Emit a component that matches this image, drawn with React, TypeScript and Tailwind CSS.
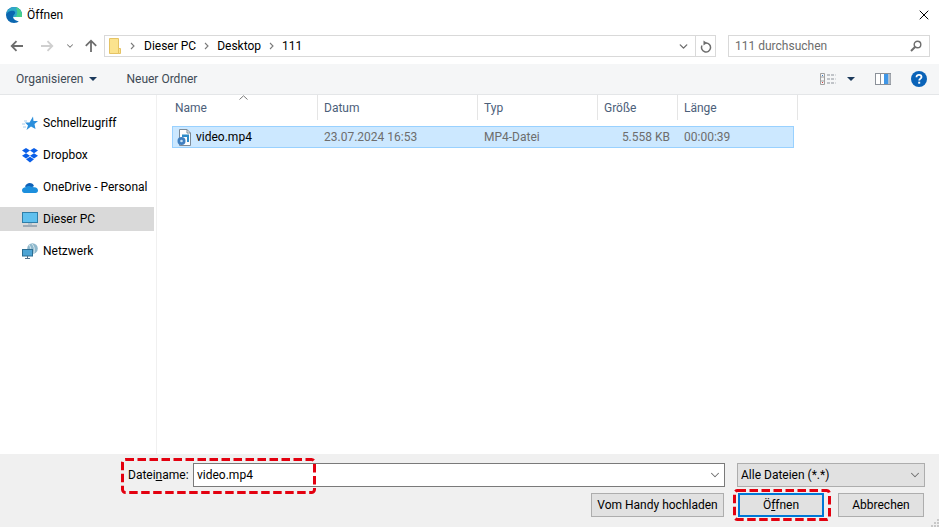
import { ChevronDown, X } from "lucide-react";

const font = "font-['Roboto',sans-serif]";

function EdgeLogo() {
  return (
    <svg width="16" height="16" viewBox="0 0 16 16">
      <circle cx="8" cy="8" r="8" fill="#0b67b0" />
      <path d="M0.200 7C1 3 4.500 0 8 0c4.500 0 8 3.500 8 8v2H7c0-2 2.200-2.800 2.200-4.500S6.500 3.500 4.500 4 1.200 5.500 0.200 7Z" fill="#2fa9c9" />
      <path d="M10 0.300c3.500 1 6 4 6 7.700v2H9.500c1.500-1.500 2-4 1.500-6Z" fill="#48cf8c" />
      <path d="M7 10H16.500V16H11.500L13 14.400C10 13.800 7.500 12.500 7 10Z" fill="#fff" />
    </svg>
  );
}

function FolderIcon() {
  return (
    <svg width="12" height="16" viewBox="0 0 12 16">
      <path d="M0.500 0.500H9.500V15.500H0.500Z" fill="#fbe38e" stroke="#e5c364" />
      <path d="M9.500 10.500H11.500V15.500H9.500Z" fill="#fbe38e" stroke="#e5c364" />
    </svg>
  );
}

function StarIcon() {
  return (
    <svg width="16" height="15" viewBox="0 0 16 15">
      <path d="M11 0.500L11.500 5H16L12.500 8L13.500 13L9 10.500L4.500 14L6 9.500L3 6.500H7.500Z" fill="#2b8fdc" />
      <path d="M2 5H5M0 8H3M1 11H4" stroke="#a8cdec" strokeWidth="1" />
    </svg>
  );
}

function DropboxIcon() {
  return (
    <svg width="16" height="15" viewBox="0 0 16 15">
      <path d="M4 0L8 2.600L4 5.200L0 2.600ZM12 0L16 2.600L12 5.200L8 2.600ZM0 7.800L4 5.200L8 7.800L4 10.400ZM12 5.200L16 7.800L12 10.400L8 7.800ZM4 11.300L8 8.700L12 11.300L8 14.500Z" fill="#0a5fe8" />
    </svg>
  );
}

function OneDriveIcon() {
  return (
    <svg width="16" height="11" viewBox="0 0 16 11">
      <path d="M3 4.500C4 1.500 7.500 0 10 1.500 11 2 11.500 3 12 4L7 7Z" fill="#0f62b8" />
      <path d="M2.500 11C1 11 0 9.800 0 8.300 0 6.500 1.500 5.200 3.500 5.200 5 4 7 3.700 8.500 4.500L12 5.200C14.500 5 16 6.500 16 8.500 16 10 15 11 13.500 11Z" fill="#1c8fdd" />
    </svg>
  );
}

function PcIcon() {
  return (
    <svg width="16" height="15" viewBox="0 0 16 15">
      <rect x="0.500" y="0.500" width="15" height="10" fill="#5fc0ee" stroke="#2f7ea8" />
      <path d="M6 11H10V13H6Z" fill="#b6c2cc" />
      <path d="M1 14H15" stroke="#8a9aa8" strokeWidth="1.500" />
    </svg>
  );
}

function NetworkIcon() {
  return (
    <svg width="16" height="16" viewBox="0 0 16 16">
      <circle cx="10.500" cy="5.500" r="5.300" fill="#8fb8cc" />
      <path d="M7 2C9 4 9 7 8 9M10 1C12 3 13 6 12 10" stroke="#d7e7ee" fill="none" />
      <rect x="0.500" y="6.500" width="10" height="6.500" fill="#4da4d4" stroke="#2b6d92" />
      <path d="M3 15.500H8M5.500 13V15" stroke="#55728a" />
    </svg>
  );
}

function VideoFileIcon() {
  return (
    <svg width="14" height="17" viewBox="0 0 14 17">
      <path d="M2.500 0.500H10L13.500 4V16.500H2.500Z" fill="#fdfdfd" stroke="#7d8a96" />
      <path d="M10 0.500V4H13.500" fill="none" stroke="#7d8a96" />
      <path d="M5 5.500H12V13H10V8H5Z" fill="#2d8bc8" />
      <circle cx="4.500" cy="12" r="4" fill="#3f7fc0" />
      <circle cx="4.500" cy="12" r="1.300" fill="#c9e2f5" />
    </svg>
  );
}

function ViewIcon() {
  return (
    <svg width="16" height="12" viewBox="0 0 16 12">
      <path d="M0.500 0.500H4.500V11.500H0.500ZM0.500 4H4.500M0.500 8H4.500" fill="none" stroke="#a0a0a0" />
      <path d="M2 2H3V3H2Z" fill="#3178c6" />
      <path d="M2 9H3V10H2Z" fill="#d9383a" />
      <path d="M7 2H15.500M7 6H15.500M7 10H15.500" stroke="#8b9199" strokeDasharray="3 1" />
    </svg>
  );
}

function PaneIcon() {
  return (
    <svg width="16" height="12" viewBox="0 0 16 12">
      <rect x="0.500" y="0.500" width="15" height="11" fill="#fff" stroke="#8b9199" />
      <path d="M5.500 0.500V11.500" stroke="#8b9199" />
      <rect x="9" y="1" width="4.500" height="10" fill="#3f96e6" />
      <rect x="13.500" y="1" width="2" height="10" fill="#b8bcc2" />
    </svg>
  );
}

function HelpIcon() {
  return (
    <svg width="16" height="16" viewBox="0 0 16 16">
      <circle cx="8" cy="8" r="8" fill="#0a63b8" />
      <path d="M5.500 6.200C5.500 4.600 6.600 3.800 8 3.800 9.500 3.800 10.500 4.600 10.500 5.900 10.500 7.500 8.200 7.700 8.200 9.500" fill="none" stroke="#fff" strokeWidth="1.800" />
      <rect x="7.200" y="10.700" width="2" height="2" fill="#fff" />
    </svg>
  );
}

function ArrowIcon({ flip, color }: { flip?: boolean; color: string }) {
  return (
    <svg width="14" height="12" viewBox="0 0 14 12" className={flip ? "rotate-180" : ""}>
      <path d="M13 6H2M6.500 1.200L1.700 6L6.500 10.800" fill="none" stroke={color} strokeWidth="1.800" />
    </svg>
  );
}

function Crumb() {
  return (
    <svg width="5" height="8" viewBox="0 0 5 8">
      <path d="M1 1L4 4L1 7" fill="none" stroke="#7a7a7a" strokeWidth="1.100" />
    </svg>
  );
}

// red annotation frames drawn on top of the dialog
function DashedFrame({ className, w, h }: { className: string; w: number; h: number }) {
  return (
    <svg width={w} height={h} className={`absolute ${className}`}>
      <rect x="1.500" y="1.500" width={w - 3} height={h - 3} rx="3" fill="none" stroke="#e3000f" strokeWidth="3" strokeDasharray="8.500 3.500" />
    </svg>
  );
}

const sidebarItems = [
  { icon: <StarIcon />, label: "Schnellzugriff" },
  { icon: <DropboxIcon />, label: "Dropbox" },
  { icon: <OneDriveIcon />, label: "OneDrive - Personal" },
  { icon: <PcIcon />, label: "Dieser PC", active: true },
  { icon: <NetworkIcon />, label: "Netzwerk" },
];

export default function App() {
  return (
    <div className={`${font} relative flex h-[527px] w-[939px] flex-col overflow-hidden bg-white text-[12px] leading-[16px] text-[#1a1a1a]`}>
      {/* title bar */}
      <div className="flex h-[30px] items-center pl-[6px] pr-[4px]">
        <EdgeLogo />
        <span className="ml-[5px] flex-1 text-black">Öffnen</span>
        <X size={16} strokeWidth={1.500} className="mr-[3px] text-black" />
      </div>

      {/* address row */}
      <div className="flex h-[34px] items-center pb-[2px]">
        <div className="ml-[10px] flex w-[94px] items-center">
          <ArrowIcon color="#6d6d6d" />
          <span className="ml-[16px]">
            <ArrowIcon flip color="#cfcfcf" />
          </span>
          <ChevronDown size={10} strokeWidth={2.500} className="ml-[11px] text-[#7a7a7a]" />
          <svg width="14" height="14" viewBox="0 0 14 14" className="ml-[9px]">
            <path d="M7 13V2M1.800 6.800L7 1.700L12.200 6.800" fill="none" stroke="#6d6d6d" strokeWidth="1.800" />
          </svg>
        </div>
        <div className="flex h-[22px] w-[612px] items-center border border-[#d9d9d9] text-black">
          <span className="ml-[4px] flex"><FolderIcon /></span>
          <span className="ml-[9px] flex"><Crumb /></span>
          <span className="ml-[9px]">Dieser PC</span>
          <span className="ml-[8px] flex"><Crumb /></span>
          <span className="ml-[8px]">Desktop</span>
          <span className="ml-[8px] flex"><Crumb /></span>
          <span className="ml-[8px]">111</span>
          <ChevronDown size={13} strokeWidth={2.500} className="ml-auto mr-[5px] text-[#6d6d6d]" />
          <div className="flex h-full w-[20px] items-center justify-center border-l border-[#d9d9d9]">
            <svg width="12" height="13" viewBox="0 0 12 13">
              <path d="M6 3A4.500 4.500 0 1 1 2 5.500" fill="none" stroke="#6d6d6d" strokeWidth="1.500" />
              <path d="M3.500 0.500L7 3L3.500 5.500Z" fill="#6d6d6d" />
            </svg>
          </div>
        </div>
        <div className="ml-[12px] flex h-[22px] w-[202px] items-center justify-between border border-[#d9d9d9] pl-[6px] pr-[7px] text-[#6d6d6d]">
          <span>111 durchsuchen</span>
          <svg width="12" height="12" viewBox="0 0 12 12">
            <circle cx="7.500" cy="4.500" r="3.300" fill="none" stroke="#6d6d6d" strokeWidth="1.400" />
            <path d="M5 7L1 11" stroke="#6d6d6d" strokeWidth="2" />
          </svg>
        </div>
      </div>

      {/* toolbar */}
      <div className="flex h-[31px] items-center border-b border-[#e4e6e8] bg-[#f5f6f7] text-[#404a55]">
        <span className="ml-[16px]">Organisieren</span>
        <span className="ml-[6px] h-0 w-0 border-x-[4px] border-t-[4px] border-x-transparent border-t-[#1c3a5c]" />
        <span className="ml-[29px]">Neuer Ordner</span>
        <span className="ml-auto"><ViewIcon /></span>
        <span className="ml-[11px] h-0 w-0 border-x-[4px] border-t-[4px] border-x-transparent border-t-[#1c3a5c]" />
        <span className="ml-[20px]"><PaneIcon /></span>
        <span className="ml-[20px] mr-[12px]"><HelpIcon /></span>
      </div>

      {/* sidebar and file list */}
      <div className="flex flex-1">
        <div className="flex w-[157px] flex-col border-r border-[#f0f0f0] pt-[16px]">
          {sidebarItems.map((item) => (
            <div
              key={item.label}
              className={`mb-[8px] mr-[2px] flex h-[24px] items-center ${item.active ? "bg-[#d9d9d9]" : ""}`}
            >
              <span className="flex w-[43px] justify-end pr-[5px]">{item.icon}</span>
              <span className="whitespace-nowrap text-black">{item.label}</span>
            </div>
          ))}
        </div>
        <div className="flex flex-1 flex-col">
          <div className="relative flex h-[25px] items-center text-[#4c607a]">
            <span className="absolute left-[82px] top-[0px]">
              <svg width="9" height="5" viewBox="0 0 9 5">
                <path d="M0.500 4.500L4.500 0.800L8.500 4.500" fill="none" stroke="#7a7a7a" />
              </svg>
            </span>
            <div className="flex h-full w-[161px] items-center border-r border-[#e5e5e5] pl-[18px]">Name</div>
            <div className="flex h-full w-[160px] items-center border-r border-[#e5e5e5] pl-[6px]">Datum</div>
            <div className="flex h-full w-[120px] items-center border-r border-[#e5e5e5] pl-[6px]">Typ</div>
            <div className="flex h-full w-[80px] items-center border-r border-[#e5e5e5] pl-[6px]">Größe</div>
            <div className="flex h-full w-[120px] items-center border-r border-[#e5e5e5] pl-[6px]">Länge</div>
          </div>
          <div className="ml-[15px] mt-[6px] flex h-[22px] w-[622px] items-center border border-[#99d1ff] bg-[#cce8ff] text-[#6d6d6d]">
            <div className="flex w-[145px] items-center pl-[4px]">
              <VideoFileIcon />
              <span className="ml-[5px] text-black">video.mp4</span>
            </div>
            <div className="w-[160px] pl-[6px]">23.07.2024 16:53</div>
            <div className="w-[120px] pl-[6px]">MP4-Datei</div>
            <div className="w-[72px] text-right">5.558 KB</div>
            <div className="pl-[14px]">00:00:39</div>
          </div>
        </div>
      </div>

      {/* footer */}
      <div className="flex h-[73px] flex-col bg-[#f0f0f0] pt-[9px]">
        <div className="flex h-[24px] items-center">
          <span className="ml-[128px] w-[65px] whitespace-nowrap text-black">
            Datei<span className="underline">n</span>ame:
          </span>
          <div className="flex h-full w-[532px] items-center border border-[#7a7a7a] bg-white pl-[3px] text-black">
            <span className="flex-1">video.mp4</span>
            <ChevronDown size={14} strokeWidth={1.800} className="mr-[2px] text-[#6d6d6d]" />
          </div>
          <div className="ml-[12px] flex h-full w-[188px] items-center border border-[#adadad] bg-[#e1e1e1] pl-[3px] text-black">
            <span className="flex-1">Alle Dateien (*.*)</span>
            <ChevronDown size={14} strokeWidth={1.800} className="mr-[2px] text-[#6d6d6d]" />
          </div>
        </div>
        <div className="mt-[6px] flex h-[24px] text-black">
          <button className="ml-[591px] h-full w-[133px] border border-[#adadad] bg-[#e1e1e1]">Vom Handy hochladen</button>
          <button className="ml-[14px] h-full w-[86px] border-2 border-[#0078d7] bg-[#e1e1e1]">
            Ö<span className="underline">f</span>fnen
          </button>
          <button className="ml-[14px] h-full w-[86px] border border-[#adadad] bg-[#e1e1e1]">Abbrechen</button>
        </div>
      </div>

      {/* resize grip */}
      <svg width="8" height="8" viewBox="0 0 8 8" className="absolute bottom-0 right-0">
        <path d="M6 0H8V2H6ZM3 3H5V5H3ZM6 3H8V5H6ZM0 6H2V8H0ZM3 6H5V8H3ZM6 6H8V8H6Z" fill="#c8c8c8" />
      </svg>

      <DashedFrame className="left-[121px] top-[458px]" w={195} h={36} />
      <DashedFrame className="left-[733px] top-[489px]" w={98} h={32} />
    </div>
  );
}
